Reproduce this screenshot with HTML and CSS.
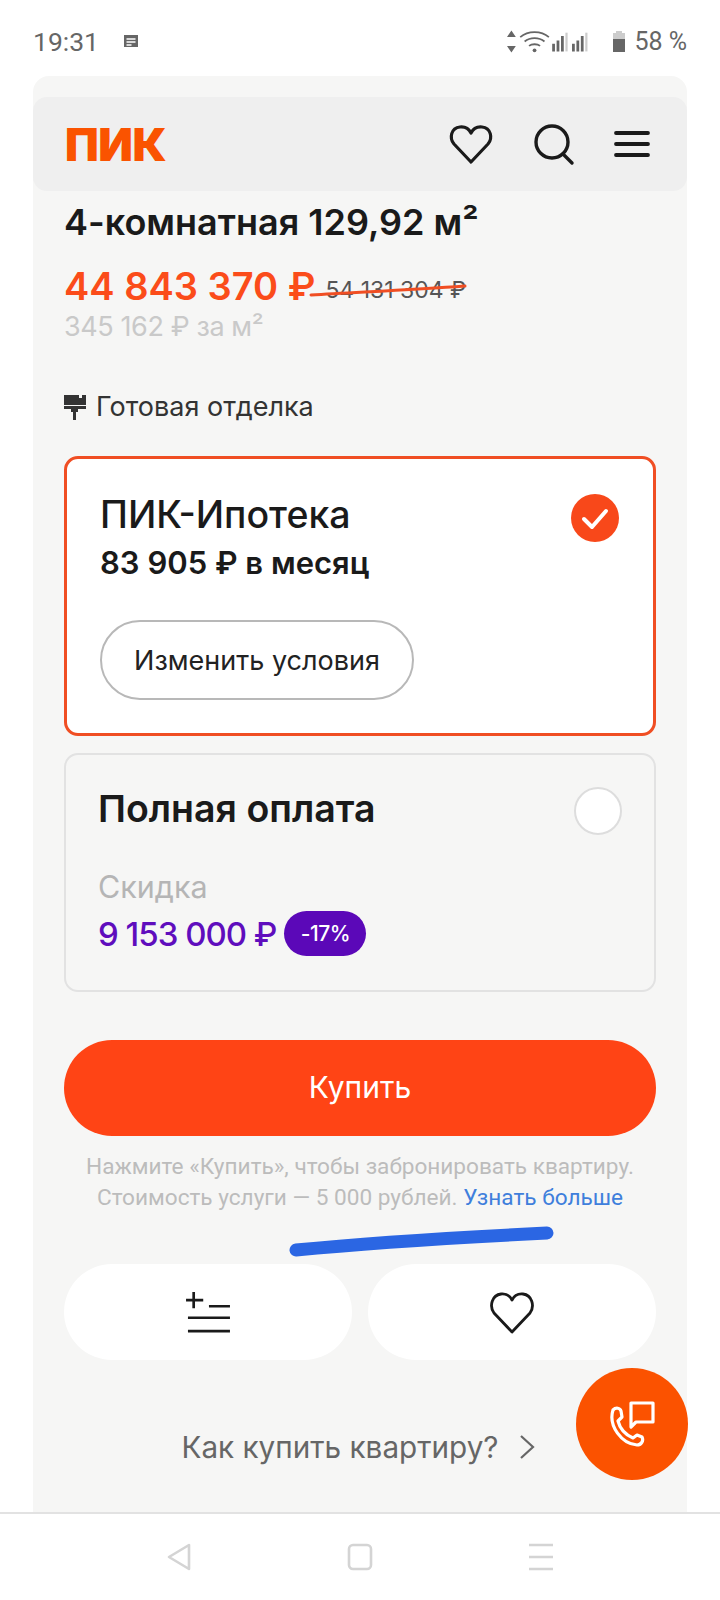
FILE: index.html
```html
<!DOCTYPE html>
<html lang="ru">
<head>
  <meta charset="UTF-8" />
  <meta name="viewport" content="width=device-width, initial-scale=1.0" />
  <title>ПИК - 4-комнатная квартира</title>
  <link rel="stylesheet" href="styles.css">
</head>
<body>
  <div class="statusbar">
    <div class="status-left">
      <span>19:31</span>
      <svg class="status-note" viewBox="0 0 16 16" width="16" height="16"><path d="M1 2h14v12H1z" fill="#666"/><path d="M3.500 6h9M3.500 9h9M3.500 12h5" stroke="#fff" stroke-width="1.400"/></svg>
    </div>
    <div class="status-right">
      <svg viewBox="0 0 88 26" width="97" height="29" fill="#666">
        <path d="M4 3l4 6H0zM4 23l4-6H0z"/>
        <path d="M12 9c7-6 19-6 26 0M16 13c5-4 13-4 18 0M20 17c2.500-2 7.500-2 10 0" fill="none" stroke="#666" stroke-width="1.600"/>
        <circle cx="25" cy="21" r="1.700"/>
        <path d="M41 15h2.500v7H41zM45 12h2.500v10H45zM49 8h2.500v14H49z"/>
        <path d="M53 5h2v17h-2z" fill="#ccc"/>
        <path d="M59 15h2.500v7H59zM63 12h2.500v10H63zM67 8h2.500v14H67z"/>
        <path d="M71 5h2v17h-2z" fill="#ccc"/>
      </svg>
      <svg viewBox="0 0 16 26" width="16" height="26"><path d="M5 3h6v2h3v19H2V5h3z" fill="#ccc"/><path d="M2 11h12v13H2z" fill="#666"/></svg>
      <span>58 %</span>
    </div>
  </div>

  <main class="panel">
    <header class="topbar">
      <a href="#" class="logo">ПИК</a>
      <div class="topbar-icons">
        <svg viewBox="0 0 46 46" width="46" height="46" fill="none" stroke="#1a1a1a" stroke-width="3.200" stroke-linejoin="round"><path d="M23 41L6 23C1 17 3 7 12 6c5-.5 9 2 11 6 2-4 6-6.500 11-6 9 1 11 11 6 17z"/></svg>
        <svg viewBox="0 0 46 46" width="46" height="46" fill="none" stroke="#1a1a1a" stroke-width="3.400" stroke-linecap="round"><circle cx="22" cy="21" r="16"/><path d="M33 33l9 9"/></svg>
        <svg viewBox="0 0 40 46" width="40" height="46" fill="none" stroke="#1a1a1a" stroke-width="3.800" stroke-linecap="round"><path d="M4 12h32M4 23h32M4 34h32"/></svg>
      </div>
    </header>

    <section class="content">
      <h1 class="flat-title">4-комнатная 129,92 м²</h1>
      <div class="price-row">
        <span class="price">44 843 370 ₽</span>
        <span class="price-old">54 131 304 ₽</span>
      </div>
      <div class="price-per">345 162 ₽ за м²</div>
      <div class="finish">
        <svg viewBox="0 0 22 26" width="22" height="26" fill="#333"><path d="M0 1h15v3h3v-3h4v10H0zM0 12h22v3H14v3h-2v8H9v-8H7v-3H0z"/></svg>
        <span>Готовая отделка</span>
      </div>

      <div class="card card-active">
        <div class="card-head">
          <div>
            <div class="card-title">ПИК-Ипотека</div>
            <div class="card-sub">83 905 ₽ в месяц</div>
          </div>
          <svg class="radio-on" viewBox="0 0 48 48" width="48" height="48"><circle cx="24" cy="24" r="24" fill="#f8481a"/><path d="M13 25l8 8 14-16" fill="none" stroke="#fff" stroke-width="4" stroke-linecap="round" stroke-linejoin="round"/></svg>
        </div>
        <button class="btn-outline">Изменить условия</button>
      </div>

      <div class="card card-plain">
        <div class="card-head">
          <div class="card-title card-title-bold">Полная оплата</div>
          <span class="radio-off"></span>
        </div>
        <div class="discount-label">Скидка</div>
        <div class="discount-row">
          <span class="discount-price">9 153 000 ₽</span>
          <span class="badge">-17%</span>
        </div>
      </div>

      <button class="btn-buy">Купить</button>
      <p class="note">
        Нажмите «Купить», чтобы забронировать квартиру.<br>
        Стоимость услуги — 5 000 рублей. <a href="#">Узнать больше</a>
      </p>

      <div class="actions">
        <button class="btn-action">
          <svg viewBox="0 0 46 44" width="44" height="42" fill="none" stroke="#1a1a1a" stroke-width="2.800"><path d="M8 1v17M0 9.500h18M24 16h22M2 28h44M2 42h44"/></svg>
        </button>
        <button class="btn-action">
          <svg viewBox="0 0 46 46" width="46" height="46" fill="none" stroke="#1a1a1a" stroke-width="2.800" stroke-linejoin="round"><path d="M23 43L5 24C0 17 3 6 12 5c5-.5 9 2 11 6 2-4 6-6.500 11-6 9 1 12 12 7 19z"/></svg>
        </button>
      </div>

      <a href="#" class="how-to">
        <span>Как купить квартиру?</span>
        <svg viewBox="0 0 16 26" width="16" height="26" fill="none" stroke="#666" stroke-width="2.200"><path d="M2 2l12 11L2 24"/></svg>
      </a>
    </section>
  </main>

  <nav class="softkeys">
    <svg viewBox="0 0 26 30" width="26" height="30" fill="none" stroke="#d4d4d4" stroke-width="2.600" stroke-linejoin="round"><path d="M23 3v24L3 15z"/></svg>
    <svg viewBox="0 0 26 30" width="26" height="30" fill="none" stroke="#d4d4d4" stroke-width="2.600"><rect x="2" y="3" width="22" height="24" rx="4"/></svg>
    <svg viewBox="0 0 26 30" width="26" height="30" fill="none" stroke="#d4d4d4" stroke-width="2.600"><path d="M1 3h24M1 15h24M1 27h24"/></svg>
  </nav>

  <!-- pen marks drawn on top of the screenshot -->
  <svg class="scribble" viewBox="0 0 720 1600" width="720" height="1600" fill="none" stroke-linecap="round">
    <path d="M311 295c50-3 100-5 154-9" stroke="#f04e23" stroke-width="3"/>
    <path d="M296 1250c80-8 170-13 251-17" stroke="#2b66e3" stroke-width="13"/>
  </svg>

  <button class="fab">
    <svg viewBox="0 0 46 46" width="46" height="46" fill="none" stroke="#fff" stroke-width="3.200" stroke-linejoin="round">
      <path d="M4 9c3-3 7-2 8 1l1 6-4 4c2 8 8 14 15 17l4-3 5 2c2 4-1 8-5 8C13 43-1 25 4 9z"/>
      <path d="M22 2h22v19H27l-5 5z"/>
    </svg>
  </button>
</body>
</html>
```

FILE: styles.css
```css
* {
  box-sizing: border-box;
}
html, body {
  margin: 0;
  height: 1600px;
}
body {
  position: relative;
  display: flex;
  flex-direction: column;
  overflow: hidden;
  background: #fff;
  color: #1a1a1a;
  font-family: 'Inter', sans-serif;
}
a {
  text-decoration: none;
}
button {
  font-family: inherit;
  border: none;
  cursor: pointer;
}

.statusbar {
  height: 76px;
  flex: none;
  display: flex;
  justify-content: space-between;
  align-items: center;
  padding: 6px 33px 0;
  font-family: 'Roboto', sans-serif;
  font-size: 25px;
  color: #666;
}
.status-left, .status-right {
  display: flex;
  align-items: center;
}
.status-left {
  gap: 24px;
  font-size: 26.500px;
  color: #666;
}
.status-right {
  gap: 7px;
}

.panel {
  flex: 1;
  margin: 0 33px;
  padding-top: 21px;
  background: #f6f6f5;
  border-radius: 16px 16px 0 0;
  overflow: hidden;
}
.topbar {
  height: 94px;
  display: flex;
  justify-content: space-between;
  align-items: center;
  padding: 0 35px 0 32px;
  background: #efefef;
  border-radius: 14px;
}
.logo {
  font-size: 45px;
  font-weight: 900;
  letter-spacing: -.5px;
  color: #fa5300;
}
.topbar-icons {
  display: flex;
  align-items: center;
  gap: 36px;
}

.content {
  padding: 8px 31px 0;
}
.flat-title {
  margin: 0;
  font-size: 36px;
  line-height: 46px;
  font-weight: 600;
}
.price-row {
  display: flex;
  align-items: center;
  gap: 10px;
  margin-top: 18px;
  height: 46px;
}
.price {
  font-size: 38px;
  font-weight: 600;
  color: #fb4c1a;
}
.price-old {
  font-size: 23px;
  color: #555;
  padding-top: 8px;
}
.price-per {
  font-size: 27px;
  line-height: 34px;
  letter-spacing: -.4px;
  color: #c9c9c9;
  margin-top: 1px;
}
.finish {
  display: flex;
  align-items: center;
  gap: 10px;
  margin-top: 46px;
  font-size: 27px;
  line-height: 34px;
  color: #333;
}

.card {
  height: 280px;
  margin-top: 32px;
  padding: 33px 33px;
  border-radius: 14px;
}
.card-active {
  background: #fff;
  border: 3px solid #f04e23;
}
.card-plain {
  height: 239px;
  margin-top: 17px;
  padding: 31px 32px;
  border: 2px solid #e2e2e2;
}
.card-head {
  display: flex;
  justify-content: space-between;
  align-items: flex-start;
}
.card-title {
  font-size: 37.500px;
  line-height: 46px;
  font-weight: 500;
}
.card-title-bold {
  font-weight: 600;
}
.card-sub {
  margin-top: 6px;
  font-size: 31px;
  line-height: 38px;
  font-weight: 600;
}
.radio-on {
  margin: 2px 1px 0 0;
}
.radio-off {
  width: 48px;
  height: 48px;
  margin: 1px 0 0;
  background: #fff;
  border: 2px solid #ddd;
  border-radius: 50%;
}
.btn-outline {
  display: block;
  width: 314px;
  height: 80px;
  margin-top: 38px;
  background: #fff;
  border: 2px solid #b8b8b8;
  border-radius: 40px;
  font-size: 27px;
  color: #222;
}
.discount-label {
  margin-top: 33px;
  font-size: 30.500px;
  line-height: 38px;
  color: #b5b5b5;
}
.discount-row {
  display: flex;
  align-items: center;
  gap: 8px;
  margin-top: 5px;
}
.discount-price {
  font-size: 33px;
  font-weight: 500;
  letter-spacing: -1px;
  color: #5f0dbd;
}
.badge {
  width: 82px;
  height: 45px;
  display: flex;
  justify-content: center;
  align-items: center;
  background: #5b08b8;
  border-radius: 23px;
  font-size: 21px;
  font-weight: 500;
  letter-spacing: -.5px;
  color: #fff;
}

.btn-buy {
  display: block;
  width: 100%;
  height: 96px;
  margin-top: 48px;
  padding-bottom: 3px;
  background: #ff4415;
  border-radius: 48px;
  font-size: 30px;
  color: #fff;
}
.note {
  margin: 15px 0 0;
  text-align: center;
  font-family: 'Roboto', sans-serif;
  font-size: 22.600px;
  line-height: 31px;
  color: #bcbcbc;
}
.note a {
  color: #3f7fdc;
}
.actions {
  display: flex;
  gap: 16px;
  margin-top: 51px;
}
.btn-action {
  flex: 1;
  height: 96px;
  display: flex;
  justify-content: center;
  align-items: center;
  background: #fff;
  border-radius: 48px;
}
.how-to {
  display: flex;
  justify-content: center;
  align-items: center;
  gap: 20px;
  margin-top: 69px;
  padding-right: 4px;
  font-size: 29.700px;
  color: #666;
}

.softkeys {
  height: 88px;
  flex: none;
  display: flex;
  justify-content: center;
  align-items: center;
  gap: 155px;
  padding: 0 0 1px;
  background: #fff;
  border-top: 2px solid #e2e2e2;
}

.scribble {
  position: absolute;
  top: 0;
  left: 0;
  pointer-events: none;
}
.fab {
  position: absolute;
  left: 576px;
  top: 1368px;
  width: 112px;
  height: 112px;
  display: flex;
  justify-content: center;
  align-items: center;
  padding: 0;
  background: #fb5200;
  border-radius: 50%;
}
```
